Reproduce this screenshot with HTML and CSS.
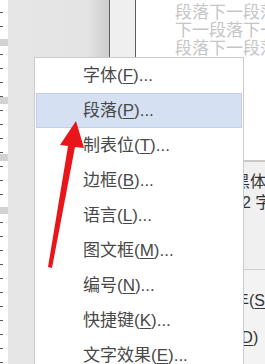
FILE: index.html
```html
<!DOCTYPE html>
<html lang="zh-CN">
  <head>
    <meta charset="UTF-8" />
    <meta name="viewport" content="width=device-width, initial-scale=1.0" />
    <title>段落菜单</title>
    <link rel="stylesheet" href="styles.css">
  </head>
  <body>
    <main class="screen">
      <div class="ruler">
        <span class="mark m1"></span>
        <span class="mark m2"></span>
        <span class="mark m3"></span>
        <span class="mark m4"></span>
      </div>
      <div class="sidebar"></div>
      <div class="gutter"></div>

      <section class="doc">
        <p class="preview">段落下一段落<br />下一段落下一<br />段落下一段落</p>
        <div class="panel">
          <div class="panel-top">
            <p>黑体</p>
            <p class="shift">2 字</p>
          </div>
          <div class="panel-bottom">
            <p>年(<u>S</u>)</p>
            <p class="shift-sm">(<u>D</u>)</p>
          </div>
        </div>
      </section>

      <ul class="menu" role="menu">
        <li class="menu-item" role="menuitem">字体(<u>F</u>)...</li>
        <li class="menu-item active" role="menuitem">段落(<u>P</u>)...</li>
        <li class="menu-item" role="menuitem">制表位(<u>T</u>)...</li>
        <li class="menu-item" role="menuitem">边框(<u>B</u>)...</li>
        <li class="menu-item" role="menuitem">语言(<u>L</u>)...</li>
        <li class="menu-item" role="menuitem">图文框(<u>M</u>)...</li>
        <li class="menu-item" role="menuitem">编号(<u>N</u>)...</li>
        <li class="menu-item" role="menuitem">快捷键(<u>K</u>)...</li>
        <li class="menu-item" role="menuitem">文字效果(<u>E</u>)...</li>
      </ul>

      <!-- red pointer drawn over the menu -->
      <svg class="arrow" width="265" height="364" viewBox="0 0 265 364" aria-hidden="true">
        <polygon
          points="76,121 84,148 75,147 52,268 48,267 68,146 60,145"
          fill="#e8161b"
        />
      </svg>
    </main>
  </body>
</html>
```

FILE: styles.css
```css
* {
  padding: 0;
  margin: 0;
  box-sizing: border-box;
}

body {
  width: 265px;
  height: 364px;
  overflow: hidden;
  background: #ffffff;
  font-family: "Liberation Sans", "Noto Sans CJK SC", sans-serif;
}

.screen {
  position: relative;
  display: flex;
  width: 265px;
  height: 364px;
  overflow: hidden;
}

.ruler {
  display: flex;
  flex-direction: column;
  width: 8px;
  flex-shrink: 0;
  background-color: #ffffff;
  background-image: repeating-linear-gradient(
    to bottom,
    transparent 0,
    transparent 12px,
    #555555 12px,
    #555555 13px,
    transparent 13px,
    transparent 14px
  );
  background-size: 3px 14px;
  background-repeat: repeat-y;
}

.mark {
  display: block;
  width: 8px;
  height: 7px;
  background: #d2d2d2;
}

.m1 {
  margin-top: 39px;
}

.m2 {
  margin-top: 51px;
}

.m3 {
  margin-top: 50px;
}

.m4 {
  margin-top: 46px;
}

.sidebar {
  width: 102px;
  flex-shrink: 0;
  background: linear-gradient(to right, #e6e6e6 0, #e4e4e4 78%, #cdcdcd 100%);
  border-right: 1px solid #5e5e5e;
}

.gutter {
  width: 26px;
  flex-shrink: 0;
  background: #efefef;
  border-right: 1px solid #5e5e5e;
}

.doc {
  display: flex;
  flex-direction: column;
  flex: 1;
  min-width: 0;
}

.preview {
  height: 160px;
  padding: 4px 0 0 39px;
  font-size: 17px;
  line-height: 18px;
  color: #c6c6c6;
  white-space: nowrap;
}

.panel {
  flex: 1;
  font-size: 16px;
  color: #333333;
  white-space: nowrap;
}

.panel-top {
  height: 109px;
  padding: 9px 0 0 98px;
  line-height: 21px;
  background: #f0f0f0;
  border-top: 2px solid #c9c9c9;
}

.panel-bottom {
  height: 100%;
  padding: 12px 0 0 97px;
  line-height: 37px;
  background: #f3f3f3;
  border-top: 1px solid #cfcfcf;
}

.shift {
  padding-left: 8px;
}

.shift-sm {
  padding-left: 3px;
}

.panel u {
  text-underline-offset: 2px;
}

.menu {
  position: absolute;
  left: 34px;
  top: 57px;
  width: 210px;
  height: 320px;
  list-style: none;
  background: #ffffff;
  border: 1px solid #cbcbcb;
  border-bottom: none;
}

.menu-item {
  height: 35px;
  margin: 0 1px;
  padding-left: 46px;
  border: 1px solid transparent;
  font-size: 17px;
  line-height: 33px;
  color: #484848;
  white-space: nowrap;
}

.menu-item.active {
  background: #d5e1f2;
  border-color: #bfcfe8;
}

.menu-item u {
  text-underline-offset: 2px;
}

.arrow {
  position: absolute;
  left: 0;
  top: 0;
  pointer-events: none;
}
```
